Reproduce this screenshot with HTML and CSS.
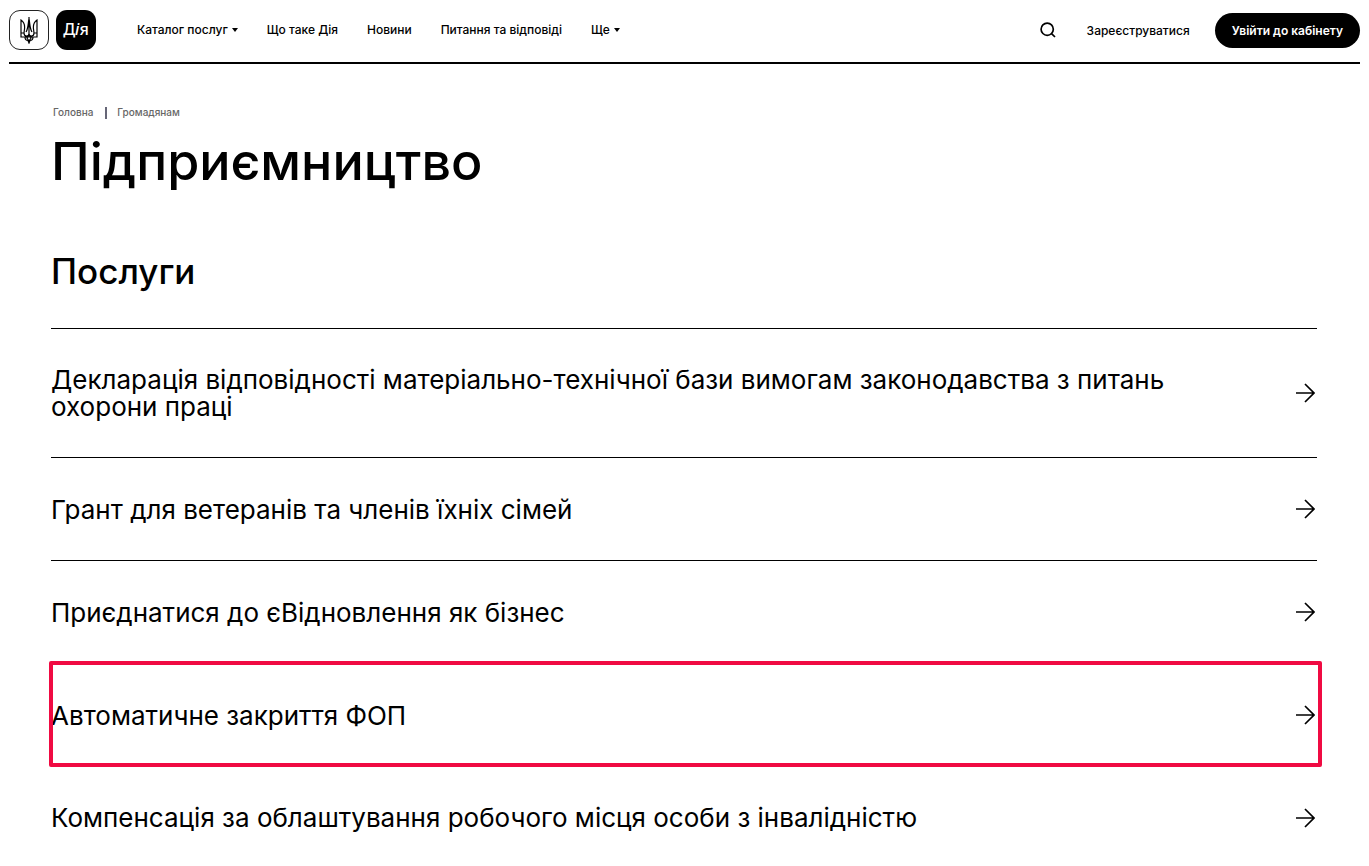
FILE: index.html
```html
<!DOCTYPE html>
<html lang="uk">
<head>
<meta charset="utf-8">
<meta name="viewport" content="width=device-width, initial-scale=1">
<title>Підприємництво</title>
<link rel="stylesheet" href="styles.css">
</head>
<body>
<svg class="symbols" aria-hidden="true">
  <symbol id="arrow" viewBox="0 0 20 20"><path d="M1 10H19M10 1l9 9-9 9" fill="none" stroke="currentColor" stroke-width="1.7"/></symbol>
</svg>
<header class="header">
  <a class="logos" href="#" aria-label="Дія">
    <span class="logo logo-state">
      <svg class="trident" viewBox="0 0 20 28" aria-hidden="true"><path d="M10 1V20M10 3C9 7 9.500 12 7 16M10 3c1 4 .5 9 3 13M2 4v17h16V4c-3 2-4 5-3.500 9l.5 4c0 2-1 3-2.500 3S10 19 10 17.500C10 19 9 20 7.500 20S5 19 5 17l.5-4C6 9 5 6 2 4zM6 21c0 2.500 1.500 3.500 3 3.500l1 2.500 1-2.500c1.500 0 3-1 3-3.500M10 19l-2 3 2 3 2-3zM2 17h3M15 17h3" fill="none" stroke="#000" stroke-width="1.200"/></svg>
    </span>
    <span class="logo logo-diia"><span>Д<i>і</i>я</span></span>
  </a>
  <nav class="nav">
    <button class="nav-item" type="button">Каталог послуг<span class="caret"></span></button>
    <a class="nav-item" href="#">Що таке Дія</a>
    <a class="nav-item" href="#">Новини</a>
    <a class="nav-item" href="#">Питання та відповіді</a>
    <button class="nav-item" type="button">Ще<span class="caret"></span></button>
  </nav>
  <div class="actions">
    <button class="search" type="button" aria-label="Пошук"><svg viewBox="0 0 16 16" aria-hidden="true"><path d="M11.800 11.800L15 15M13.300 7.200a6.100 6.100 0 1 1-12.200 0 6.100 6.100 0 0 1 12.200 0z" fill="none" stroke="#000" stroke-width="1.700"/></svg></button>
    <a class="register" href="#">Зареєструватися</a>
    <a class="login" href="#">Увійти до кабінету</a>
  </div>
</header>
<main class="main">
  <nav class="crumbs"><a href="#">Головна</a><span class="divider"></span><a href="#">Громадянам</a></nav>
  <h1 class="title">Підприємництво</h1>
  <h2 class="subtitle">Послуги</h2>
  <ul class="services">
    <li><a class="service" href="#"><span class="name">Декларація відповідності матеріально-технічної бази вимогам законодавства з питань охорони праці</span><svg class="arrow"><use href="#arrow"/></svg></a></li>
    <li><a class="service" href="#"><span class="name">Грант для ветеранів та членів їхніх сімей</span><svg class="arrow"><use href="#arrow"/></svg></a></li>
    <li><a class="service" href="#"><span class="name">Приєднатися до єВідновлення як бізнес</span><svg class="arrow"><use href="#arrow"/></svg></a></li>
    <li class="marked"><a class="service" href="#"><span class="name">Автоматичне закриття ФОП</span><svg class="arrow"><use href="#arrow"/></svg></a></li>
    <li><a class="service" href="#"><span class="name">Компенсація за облаштування робочого місця особи з інвалідністю</span><svg class="arrow"><use href="#arrow"/></svg></a></li>
  </ul>
</main>
</body>
</html>
```
FILE: styles.css
```css
* { box-sizing: border-box; }
body { margin: 0; background: #fff; color: #000; font-family: Inter, "Liberation Sans", sans-serif; }
a { color: inherit; text-decoration: none; }
button { font: inherit; color: inherit; background: none; border: 0; padding: 0; cursor: pointer; }
.symbols { display: none; }

.header { display: flex; align-items: center; height: 64px; margin: 0 9px; padding-bottom: 2px; border-bottom: 2px solid #000; }
.logos { display: flex; gap: 7px; margin-right: 41px; }
.logo { display: flex; align-items: center; justify-content: center; width: 40px; height: 40px; border-radius: 11px; }
.logo-state { border: 1px solid #222; }
.trident { width: 20px; height: 28px; }
.logo-diia { padding-bottom: 2px; background: #000; color: #fff; font: 500 16px "Noto Sans", sans-serif; }
.nav { display: flex; gap: 29px; font-size: 12px; line-height: 16px; font-weight: 500; white-space: nowrap; }
.nav-item { display: flex; align-items: center; }
.caret { margin-left: 4px; border: 3px solid transparent; border-top: 4px solid #000; border-bottom: 0; }
.actions { display: flex; align-items: center; margin-left: auto; font-size: 12px; white-space: nowrap; }
.search { width: 16px; height: 16px; margin-right: 31px; }
.search svg { display: block; width: 16px; height: 16px; }
.register { margin-right: 25px; font-weight: 500; }
.login { padding: 0 17px; border-radius: 18px; background: #000; color: #fff; font-weight: 600; line-height: 35px; }

.main { padding: 40px 52px 0 51px; }
.crumbs { display: flex; align-items: center; height: 16px; padding-left: 2px; font-size: 10px; font-weight: 500; color: #666; }
.divider { width: 2px; height: 12px; margin: 2px 10px 0 12px; background: #667; }
.title { margin: 12px 0 0; font-size: 52px; line-height: 60px; font-weight: 500; }
.subtitle { margin: 59px 0 37px; font-size: 35px; line-height: 40px; font-weight: 500; }
.services { margin: 0; padding: 0; list-style: none; }
.services li { border-top: 1px solid #000; }
.services .marked { position: relative; border-color: transparent; }
.marked::before { content: ""; position: absolute; inset: -3px -5px -1px -2px; border: 4px solid #f00a42; border-radius: 2px; pointer-events: none; }
.services .marked + li { border-color: transparent; }
.service { display: flex; align-items: center; justify-content: space-between; min-height: 102px; padding: 37px 2px 37px 0; }
.services li:last-child .service { min-height: 98px; padding-bottom: 34px; }
.name { max-width: 1140px; font-size: 26px; line-height: 27px; font-weight: 400; }
.arrow { flex: none; width: 20px; height: 20px; }
```
